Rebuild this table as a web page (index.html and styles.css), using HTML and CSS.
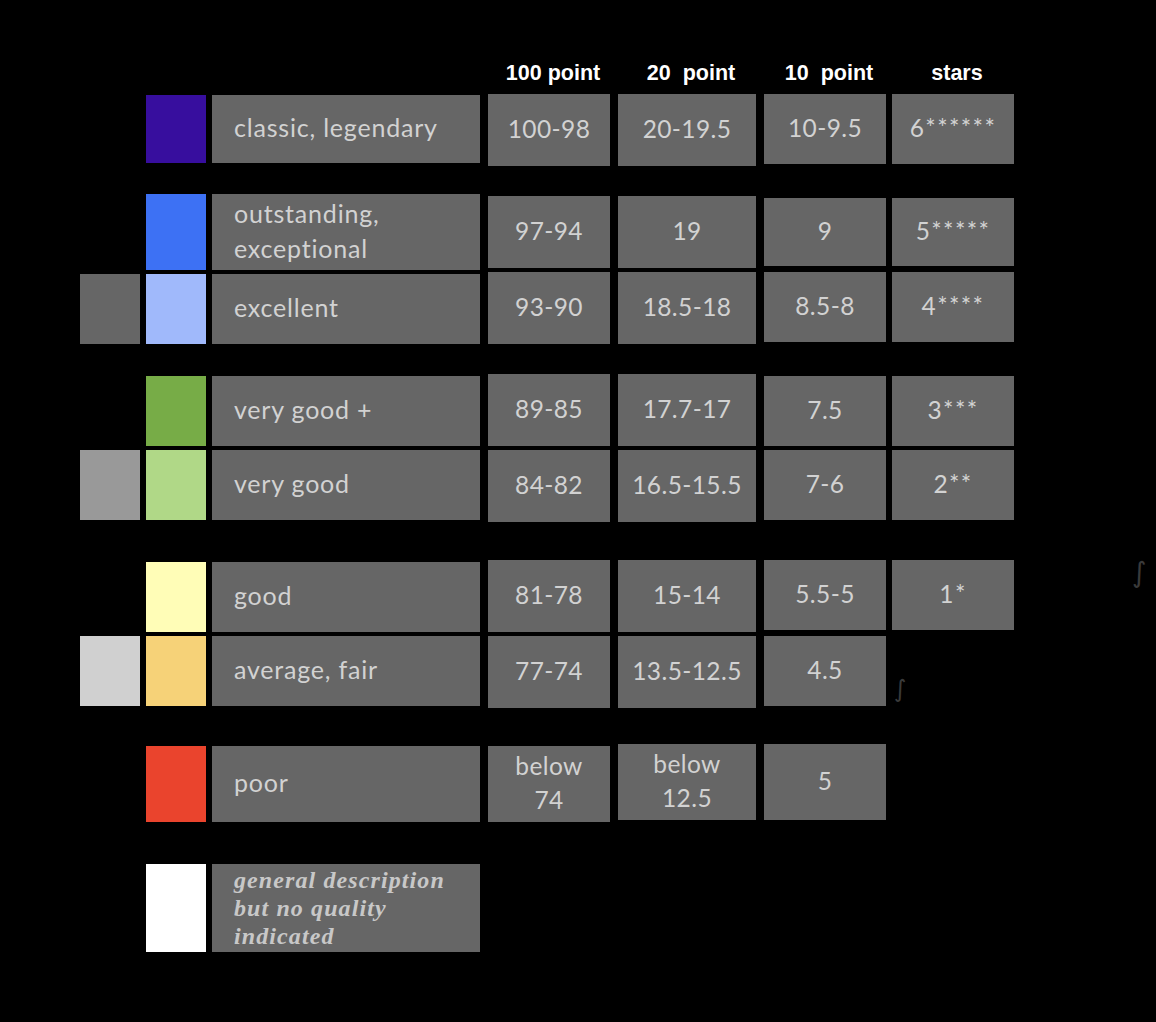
FILE: index.html
```html
<!DOCTYPE html>
<html lang="en">
<head>
<meta charset="utf-8">
<title>Wine rating scales</title>
<link rel="stylesheet" href="styles.css">
</head>
<body>
<div class="chart">
  <div class="head">
    <div class="spacer"></div>
    <div class="hc p100">100 point</div>
    <div class="hc p20">20&nbsp; point</div>
    <div class="hc p10">10&nbsp; point</div>
    <div class="hc st">stars</div>
  </div>

  <div class="row r1">
    <div class="g none h68"></div>
    <div class="sw c-classic mt1 h68"></div>
    <div class="lab mt1 h68">classic, legendary</div>
    <div class="num p100 h72">100-98</div>
    <div class="num p20 h72">20-19.5</div>
    <div class="num p10 h70">10-9.5</div>
    <div class="num stars st h70">6******</div>
  </div>

  <div class="row r2">
    <div class="g none h76"></div>
    <div class="sw c-outstanding h76"></div>
    <div class="lab h76">outstanding,<br>exceptional</div>
    <div class="num p100 mt2 h72">97-94</div>
    <div class="num p20 mt2 h72">19</div>
    <div class="num p10 mt4 h68">9</div>
    <div class="num stars st mt4 h68">5*****</div>
  </div>

  <div class="row r3">
    <div class="g g-dark mt2 h70"></div>
    <div class="sw c-excellent mt2 h70"></div>
    <div class="lab mt2 h70">excellent</div>
    <div class="num p100 h72">93-90</div>
    <div class="num p20 h72">18.5-18</div>
    <div class="num p10 h70">8.5-8</div>
    <div class="num stars st h70">4****</div>
  </div>

  <div class="row r4">
    <div class="g none h70"></div>
    <div class="sw c-vgplus mt2 h70"></div>
    <div class="lab mt2 h70">very good +</div>
    <div class="num p100 h72">89-85</div>
    <div class="num p20 h72">17.7-17</div>
    <div class="num p10 mt2 h70">7.5</div>
    <div class="num stars st mt2 h70">3***</div>
  </div>

  <div class="row r5">
    <div class="g g-mid h70"></div>
    <div class="sw c-vg h70"></div>
    <div class="lab h70">very good</div>
    <div class="num p100 h72">84-82</div>
    <div class="num p20 h72">16.5-15.5</div>
    <div class="num p10 h70">7-6</div>
    <div class="num stars st h70">2**</div>
  </div>

  <div class="row r6">
    <div class="g none h70"></div>
    <div class="sw c-good mt2 h70"></div>
    <div class="lab mt2 h70">good</div>
    <div class="num p100 h72">81-78</div>
    <div class="num p20 h72">15-14</div>
    <div class="num p10 h70">5.5-5</div>
    <div class="num stars st h70">1*</div>
  </div>

  <div class="row r7">
    <div class="g g-light h70"></div>
    <div class="sw c-average h70"></div>
    <div class="lab h70">average, fair</div>
    <div class="num p100 h72">77-74</div>
    <div class="num p20 h72">13.5-12.5</div>
    <div class="num p10 h70">4.5</div>
    <div class="blank st h70"><span class="mark">∫</span></div>
  </div>

  <div class="row r8">
    <div class="g none h76"></div>
    <div class="sw c-poor mt2 h76"></div>
    <div class="lab mt2 h76">poor</div>
    <div class="num two p100 mt2 h76">below<br>74</div>
    <div class="num two p20 h76">below<br>12.5</div>
    <div class="num p10 h76">5</div>
  </div>

  <div class="row r9">
    <div class="g none h88"></div>
    <div class="sw c-white h88"></div>
    <div class="lab note h88">general description<br>but no quality<br>indicated</div>
  </div>

  <span class="mark mark-far">∫</span>
</div>
</body>
</html>
```

FILE: styles.css
```css
html, body {
  margin: 0;
  padding: 0;
  background: #000;
}

body {
  width: 1156px;
  height: 1022px;
  overflow: hidden;
  font-family: "Lato", "Noto Sans", sans-serif;
}

.chart {
  position: relative;
  padding: 58px 0 0 80px;
  height: 1022px;
  box-sizing: border-box;
}

.head {
  display: flex;
  height: 30px;
  font-family: "Liberation Sans", Arial, sans-serif;
  font-weight: bold;
  font-size: 21.5px;
  line-height: 30px;
  color: #fff;
}

.head .spacer { width: 400px; }

.hc {
  text-align: center;
  padding-left: 8px;
  box-sizing: border-box;
  white-space: nowrap;
}

.row {
  display: flex;
  align-items: flex-start;
}

.r1 { margin-top: 6px; }
.r2 { margin-top: 28px; }
.r3 { margin-top: 2px; }
.r4 { margin-top: 30px; }
.r5 { margin-top: 4px; }
.r6 { margin-top: 38px; }
.r7 { margin-top: 4px; }
.r8 { margin-top: 36px; }
.r9 { margin-top: 42px; }

.g { width: 60px; flex: none; }
.sw { width: 60px; margin-left: 6px; flex: none; }
.lab { width: 268px; margin-left: 6px; flex: none; }
.p100 { width: 122px; margin-left: 8px; flex: none; }
.p20 { width: 138px; margin-left: 8px; flex: none; }
.p10 { width: 122px; margin-left: 8px; flex: none; }
.st { width: 122px; margin-left: 6px; flex: none; }

.h68 { height: 68px; }
.h70 { height: 70px; }
.h72 { height: 72px; }
.h76 { height: 76px; }
.h88 { height: 88px; }

.row .mt1 { margin-top: 1px; }
.row .mt2 { margin-top: 2px; }
.row .mt4 { margin-top: 4px; }

.g.none { background: transparent; }
.g-dark { background: #666666; }
.g-mid { background: #999999; }
.g-light { background: #d0d0d0; }

.c-classic { background: #370e9e; }
.c-outstanding { background: #3d71f4; }
.c-excellent { background: #a0b9fb; }
.c-vgplus { background: #77ac47; }
.c-vg { background: #b0d887; }
.c-good { background: #fffdb7; }
.c-average { background: #f6d278; }
.c-poor { background: #ea442d; }
.c-white { background: #ffffff; }

.lab,
.num {
  background: #666666;
  color: #d2d2d2;
  display: flex;
  align-items: center;
  box-sizing: border-box;
  padding-bottom: 3px;
}

.lab {
  padding-left: 22px;
  font-size: 25px;
  letter-spacing: 0.8px;
  line-height: 35px;
}

.num {
  justify-content: center;
  text-align: center;
  font-size: 24.5px;
  letter-spacing: 0.4px;
  line-height: 34px;
}

.num.stars {
  letter-spacing: 1.4px;
}

.lab.note {
  font-family: "Liberation Serif", "Times New Roman", serif;
  font-style: italic;
  font-weight: bold;
  font-size: 24px;
  letter-spacing: 1.1px;
  line-height: 28px;
  color: #c8c8c8;
  align-items: flex-start;
  padding-top: 2px;
  padding-bottom: 0;
}

.blank {
  background: transparent;
  display: flex;
  align-items: flex-end;
}

.mark {
  font-family: "DejaVu Sans", sans-serif;
  font-size: 24px;
  line-height: 30px;
  color: #3a3a3a;
  padding-left: 2px;
  padding-bottom: 2px;
}

.mark-far {
  position: absolute;
  left: 1132px;
  top: 556px;
  font-size: 28px;
  line-height: 34px;
  padding: 0;
}
```
